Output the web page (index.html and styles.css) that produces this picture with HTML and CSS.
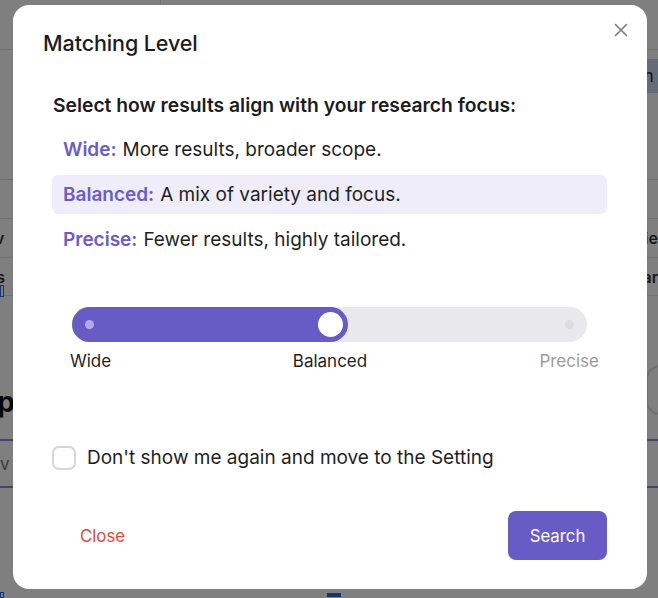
FILE: index.html
```html
<!DOCTYPE html>
<html lang="en">
<head>
<meta charset="utf-8">
<title>Matching Level</title>
<link rel="stylesheet" href="styles.css">
</head>
<body>
<div class="page">
  <div class="page-top">
    <div class="page-side"></div>
    <div class="page-main"></div>
  </div>
  <div class="page-hl"><span class="hl-text">m</span></div>
  <div class="page-gap"></div>
  <div class="page-row page-row-a"><span>av</span><span>ie</span></div>
  <div class="page-row page-row-b"><span>is</span><span>ar</span></div>
  <div class="page-mark"></div>
  <div class="page-heading"><span>op</span><span class="pill"></span></div>
  <div class="page-tabs"><span>iv</span></div>
  <div class="page-bottom"><span class="sq"></span><span class="sq sq-mid"></span></div>
</div>

<div class="overlay">
  <div class="modal" role="dialog" aria-labelledby="modal-title">
    <button class="close-x" aria-label="Close">
      <svg width="14" height="14" viewBox="0 0 14 14"><path d="M1.5 1.5 L12.5 12.5 M12.5 1.5 L1.5 12.5" stroke="#7a7a7a" stroke-width="1.6" stroke-linecap="round"/></svg>
    </button>
    <h2 class="modal-title" id="modal-title">Matching Level</h2>
    <div class="modal-body">
      <p class="lead">Select how results align with your research focus:</p>
      <ul class="options">
        <li class="option"><b>Wide:</b> More results, broader scope.</li>
        <li class="option option-active"><b>Balanced:</b> A mix of variety and focus.</li>
        <li class="option"><b>Precise:</b> Fewer results, highly tailored.</li>
      </ul>
      <div class="slider">
        <div class="track">
          <div class="fill" style="width:53.6%"><span class="dot dot-start"></span><span class="knob"></span></div>
          <span class="dot dot-end"></span>
        </div>
        <div class="labels">
          <span class="lbl lbl-left">Wide</span>
          <span class="lbl lbl-mid">Balanced</span>
          <span class="lbl lbl-right">Precise</span>
        </div>
      </div>
      <label class="check">
        <span class="box"></span>
        <span class="check-text">Don't show me again and move to the Setting</span>
      </label>
    </div>
    <div class="modal-footer">
      <button class="btn-close">Close</button>
      <button class="btn-search">Search</button>
    </div>
  </div>
</div>
</body>
</html>
```

FILE: styles.css
```css
* { box-sizing: border-box; }
html, body { margin: 0; padding: 0; }
body {
  width: 658px;
  height: 598px;
  overflow: hidden;
  font-family: Inter, "Liberation Sans", sans-serif;
  background: #ffffff;
  color: #1f1f22;
}

/* ---------- background page (dimmed) ---------- */
.page { width: 658px; height: 598px; display: flex; flex-direction: column; }
.page-top { height: 50px; display: flex; border-bottom: 1px solid #e6e6e6; }
.page-side { width: 161px; border-right: 1px solid #e0e0e0; }
.page-main { flex: 1; }
.page-hl { height: 34px; margin-top: 9px; display: flex; justify-content: flex-end; }
.hl-text { width: 20px; background: #c9d8f0; color: #1c2a55; font-size: 18px; line-height: 34px; }
.page-gap { height: 87px; border-bottom: 1px solid #e3e3e3; }
.page-row { height: 40px; display: flex; justify-content: space-between; align-items: center; border-bottom: 1px solid #e3e3e3; font-size: 16px; font-weight: 600; color: #333; }
.page-row-a { border-top: 1px solid #e3e3e3; margin-top: 38px; }
.page-row-a span:first-child { margin-left: -14px; }
.page-row-b { height: 38px; }
.page-row-b span:first-child { margin-left: -8px; }
.page-mark { width: 4px; height: 12px; margin-top: -11px; border: 1px solid #2b6be0; background: #fff; }
.page-heading { height: 142px; padding-top: 88px; display: flex; justify-content: space-between; align-items: flex-start; font-size: 28px; line-height: 34px; font-weight: 700; color: #111; }
.page-heading span:first-child { margin-left: -20px; }
.pill { width: 40px; height: 50px; margin-top: -20px; border: 2px solid #ddd; border-radius: 14px; margin-right: -28px; }
.page-tabs { height: 49px; border-top: 2px solid #8c84d8; border-bottom: 2px solid #8c84d8; display: flex; align-items: center; font-size: 17px; color: #777; }
.page-tabs span { margin-left: -4px; }
.page-bottom { flex: 1; display: flex; align-items: flex-end; }
.sq { width: 4px; height: 6px; border: 1px solid #2b6be0; background: #fff; }
.sq-mid { margin-left: 322px; width: 16px; background: #2b6be0; border-color: #fff; }

/* ---------- overlay & modal ---------- */
.overlay {
  position: fixed;
  inset: 0;
  background: rgba(0, 0, 0, 0.5);
  display: flex;
  align-items: flex-start;
  justify-content: flex-start;
  padding: 5px 11px 9px 13px;
}
.modal {
  position: relative;
  width: 634px;
  height: 584px;
  background: #ffffff;
  border-radius: 16px;
  padding: 26px 40px 29px 39px;
  display: flex;
  flex-direction: column;
}
.close-x {
  position: absolute;
  top: 18px;
  right: 19px;
  width: 14px;
  height: 14px;
  padding: 0;
  border: 0;
  background: none;
  display: flex;
}
.modal-title {
  margin: 0 0 0 -9px;
  font-size: 21.5px;
  line-height: 24px;
  font-weight: 500;
  color: #1c1c1f;
  letter-spacing: -0.1px;
}
.modal-body { display: flex; flex-direction: column; flex: 1; }
.lead {
  margin: 38px 0 0 1px;
  font-size: 19.3px;
  line-height: 24px;
  font-weight: 600;
  color: #1c1c1f;
}
.options { list-style: none; margin: 13px 0 0; padding: 0; display: flex; flex-direction: column; gap: 6px; }
.option {
  height: 39px;
  padding: 0 11px;
  display: flex;
  align-items: center;
  gap: 6px;
  border-radius: 6px;
  font-size: 19px;
  color: #1f1f22;
}
.option b { color: #6a5ccb; font-weight: 600; }
.option-active { background: #efedf9; }

.slider { margin-top: 48px; padding: 0 20px; }
.track {
  position: relative;
  height: 35px;
  border-radius: 18px;
  background: #e9e9eb;
}
.fill {
  position: relative;
  height: 35px;
  border-radius: 18px;
  background: #675bc6;
}
.dot { position: absolute; top: 13px; width: 9px; height: 9px; border-radius: 50%; }
.dot-start { left: 13px; background: #b3abe6; }
.dot-end { right: 13px; background: #dddde0; }
.knob {
  position: absolute;
  right: 2px;
  top: 2px;
  width: 31px;
  height: 31px;
  border-radius: 50%;
  background: #fff;
  border: 3px solid #675bc6;
}
.labels {
  margin: 9px -12px 0 -2px;
  display: grid;
  grid-template-columns: 1fr 1fr 1fr;
  font-size: 17px;
  line-height: 20px;
  color: #1f1f22;
}
.lbl-left { text-align: left; }
.lbl-mid { text-align: center; padding-right: 9px; }
.lbl-right { text-align: right; color: #9c9ca0; }

.check {
  margin-top: 75px;
  display: flex;
  align-items: center;
  gap: 11px;
  font-size: 19px;
  line-height: 24px;
  color: #1f1f22;
}
.box {
  width: 24px;
  height: 24px;
  border: 2px solid #d6d6da;
  border-radius: 7px;
  background: #fff;
}

.modal-footer {
  display: flex;
  justify-content: space-between;
  align-items: center;
}
.btn-close {
  border: 0;
  background: none;
  font-family: inherit;
  font-size: 16.8px;
  color: #e04a3c;
  padding: 0;
  margin-left: 28px;
}
.btn-search {
  width: 99px;
  height: 49px;
  border: 0;
  border-radius: 8px;
  background: #675bc6;
  color: #fff;
  font-family: inherit;
  font-size: 16.8px;
}
```
